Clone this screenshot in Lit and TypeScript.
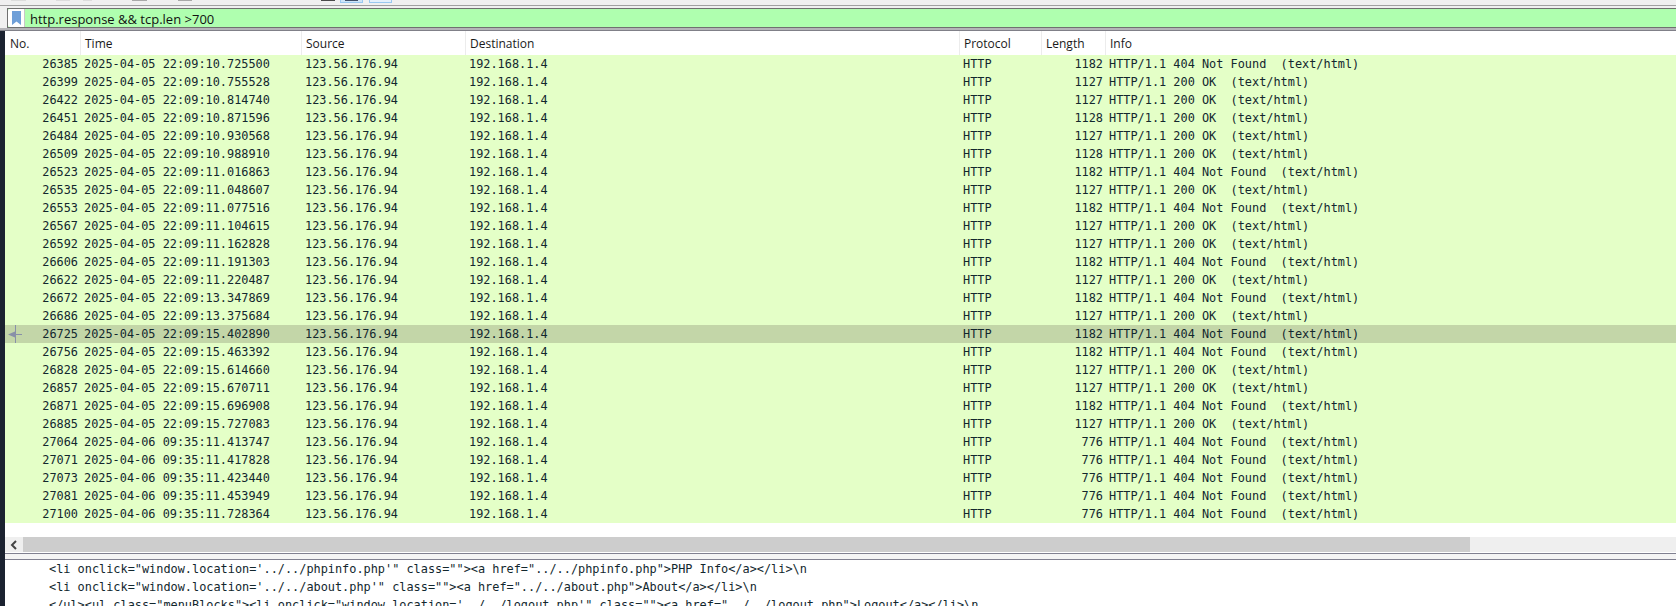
import { LitElement, html, css } from "lit";
import { customElement } from "lit/decorators.js";

const NF = "HTTP/1.1 404 Not Found  (text/html)";
const OK = "HTTP/1.1 200 OK  (text/html)";
type Row = [string, string, string, string];
const rows: Row[] = [
  ["26385", "2025-04-05 22:09:10.725500", "1182", NF],
  ["26399", "2025-04-05 22:09:10.755528", "1127", OK],
  ["26422", "2025-04-05 22:09:10.814740", "1127", OK],
  ["26451", "2025-04-05 22:09:10.871596", "1128", OK],
  ["26484", "2025-04-05 22:09:10.930568", "1127", OK],
  ["26509", "2025-04-05 22:09:10.988910", "1128", OK],
  ["26523", "2025-04-05 22:09:11.016863", "1182", NF],
  ["26535", "2025-04-05 22:09:11.048607", "1127", OK],
  ["26553", "2025-04-05 22:09:11.077516", "1182", NF],
  ["26567", "2025-04-05 22:09:11.104615", "1127", OK],
  ["26592", "2025-04-05 22:09:11.162828", "1127", OK],
  ["26606", "2025-04-05 22:09:11.191303", "1182", NF],
  ["26622", "2025-04-05 22:09:11.220487", "1127", OK],
  ["26672", "2025-04-05 22:09:13.347869", "1182", NF],
  ["26686", "2025-04-05 22:09:13.375684", "1127", OK],
  ["26725", "2025-04-05 22:09:15.402890", "1182", NF],
  ["26756", "2025-04-05 22:09:15.463392", "1182", NF],
  ["26828", "2025-04-05 22:09:15.614660", "1127", OK],
  ["26857", "2025-04-05 22:09:15.670711", "1127", OK],
  ["26871", "2025-04-05 22:09:15.696908", "1182", NF],
  ["26885", "2025-04-05 22:09:15.727083", "1127", OK],
  ["27064", "2025-04-06 09:35:11.413747", "776", NF],
  ["27071", "2025-04-06 09:35:11.417828", "776", NF],
  ["27073", "2025-04-06 09:35:11.423440", "776", NF],
  ["27081", "2025-04-06 09:35:11.453949", "776", NF],
  ["27100", "2025-04-06 09:35:11.728364", "776", NF],
];

const detail = [
  `<li onclick="window.location='../../phpinfo.php'" class=""><a href="../../phpinfo.php">PHP Info</a></li>\\n`,
  `<li onclick="window.location='../../about.php'" class=""><a href="../../about.php">About</a></li>\\n`,
  `</ul><ul class="menuBlocks"><li onclick="window.location='../../logout.php'" class=""><a href="../../logout.php">Logout</a></li>\\n`,
];

// Cropped toolbar icons along the top edge: [gap before, width, kind]
const tools: [number, number, string][] = [
  [11, 15, "faint"], [30, 14, "faint"], [13, 9, "faint"], [40, 15, "mid"], [31, 14, "mid"],
  [129, 14, "dark"], [5, 23, "on"], [6, 23, "on2"],
];

@customElement("app-root")
export class AppRoot extends LitElement {
  static styles = css`
    :host { display: block; width: 1676px; height: 606px; overflow: hidden; background: #fff; }
    .toolbar { display: flex; align-items: flex-start; height: 5px; background: #f0f0f0; }
    .tool { height: 2px; }
    .faint { background: #dcdcdc; height: 1px; }
    .mid { background: #a8a8a8; height: 1px; }
    .dark { background: #4a4a4a; height: 1px; }
    .on { height: 3px; background: #cde4f7; border: 1px solid #99c8f0; border-top: none; box-sizing: border-box; padding: 0 4px; }
    .on::before { content: ""; display: block; height: 1px; background: #40506a; }
    .on2 { height: 3px; background: #e4f0fb; border: 1px solid #99c8f0; border-top: none; box-sizing: border-box; }
    .filterwrap { height: 23px; background: #f0f0f0; box-sizing: border-box; border-top: 1px solid #a0a0a0; padding-top: 2px; }
    .filter {
      height: 20px; box-sizing: border-box; margin-left: 7px; background: #afffaf;
      border-top: 1px solid #707070; border-bottom: 1px solid #707070; border-left: 1px solid #707070;
      display: flex; align-items: center;
      font: 13px "Open Sans", sans-serif; color: #111;
    }
    .filter span { padding-top: 1px; }
    .bookmark { width: 16px; height: 18px; background: #fff; border-radius: 2px 0 0 2px; display: flex; align-items: center; justify-content: center; margin-right: 5px; flex: none; border-right: 1px solid #c8c8c8; }
    .under { height: 3px; background: #b4b4b8; border-bottom: 1px solid #808088; box-sizing: border-box; }
    .main { display: flex; height: 575px; }
    .strip { width: 5px; background: #1b2230; flex: none; }
    .content { flex: 1; min-width: 0; display: flex; flex-direction: column; }
    .grid { display: grid; grid-template-columns: 75px 221px 164px 494px 82px 64px 1fr; }
    .head { height: 24px; background: #fff; font: 12px "Open Sans", sans-serif; color: #1a1a1a; }
    .head > div { padding-left: 4px; line-height: 26px; border-left: 1px solid #ececec; box-sizing: border-box; }
    .head > div:first-child { border-left: none; padding-left: 5px; }
    .list { height: 468px; }
    .row { height: 18px; background: #e4ffc7; font: 11.88px/18px "DejaVu Sans Mono", monospace; color: #12272e; white-space: pre; position: relative; }
    .row.sel { background: #c3d6a8; }
    .row > div { padding-left: 4px; overflow: hidden; }
    .row > .r { padding: 0 2px 0 0; text-align: right; }
    .marker { position: absolute; left: 2px; top: 0; }
    .gap { height: 14px; }
    .hscroll { display: flex; height: 15px; background: #efefef; }
    .arrow { width: 18px; display: flex; align-items: center; justify-content: center; }
    .thumb { width: 1447px; background: #cdcdcd; }
    .split { height: 7px; margin-top: 1px; background: #f4f4f4; border-top: 1px solid #808090; border-bottom: 1px solid #808090; box-sizing: border-box; }
    .detail { flex: 1; overflow: hidden; padding-left: 44px; font: 11.88px/18px "DejaVu Sans Mono", monospace; color: #12272e; white-space: pre; }
  `;

  render() {
    return html`
      <div class="toolbar">
        ${tools.map(([g, w, k]) => html`<div class="tool ${k}" style="margin-left:${g}px;width:${w}px"></div>`)}
      </div>
      <div class="filterwrap">
        <div class="filter">
          <div class="bookmark">
            <svg width="9" height="14" viewBox="0 0 9 14"><path d="M0 0H9V14L4.5 10.5L0 14Z" fill="#6f9fd8"/></svg>
          </div>
          <span>http.response &amp;&amp; tcp.len &gt;700</span>
        </div>
      </div>
      <div class="under"></div>
      <div class="main">
        <div class="strip"></div>
        <div class="content">
          <div class="grid head">
            <div>No.</div><div>Time</div><div>Source</div><div>Destination</div><div>Protocol</div><div>Length</div><div>Info</div>
          </div>
          <div class="list">
            ${rows.map((r) => html`
              <div class="grid row ${r[0] === "26725" ? "sel" : ""}">
                ${r[0] === "26725" ? html`<svg class="marker" width="16" height="18" viewBox="0 0 16 18"><path d="M8.5 0V18M8 9.5H15" stroke="#8890a8" fill="none"/><path d="M1 9.5L8 6.5V12.5Z" fill="#8890a8"/></svg>` : ""}
                <div class="r">${r[0]}</div><div>${r[1]}</div><div>123.56.176.94</div><div>192.168.1.4</div><div>HTTP</div><div class="r">${r[2]}</div><div>${r[3]}</div>
              </div>`)}
          </div>
          <div class="gap"></div>
          <div class="hscroll">
            <div class="arrow"><svg width="8" height="10" viewBox="0 0 8 10"><path d="M6 1L2 5L6 9" stroke="#444" stroke-width="2" fill="none"/></svg></div>
            <div class="thumb"></div>
          </div>
          <div class="split"></div>
          <div class="detail">${detail.map((l) => html`<div>${l}</div>`)}</div>
        </div>
      </div>
    `;
  }
}
